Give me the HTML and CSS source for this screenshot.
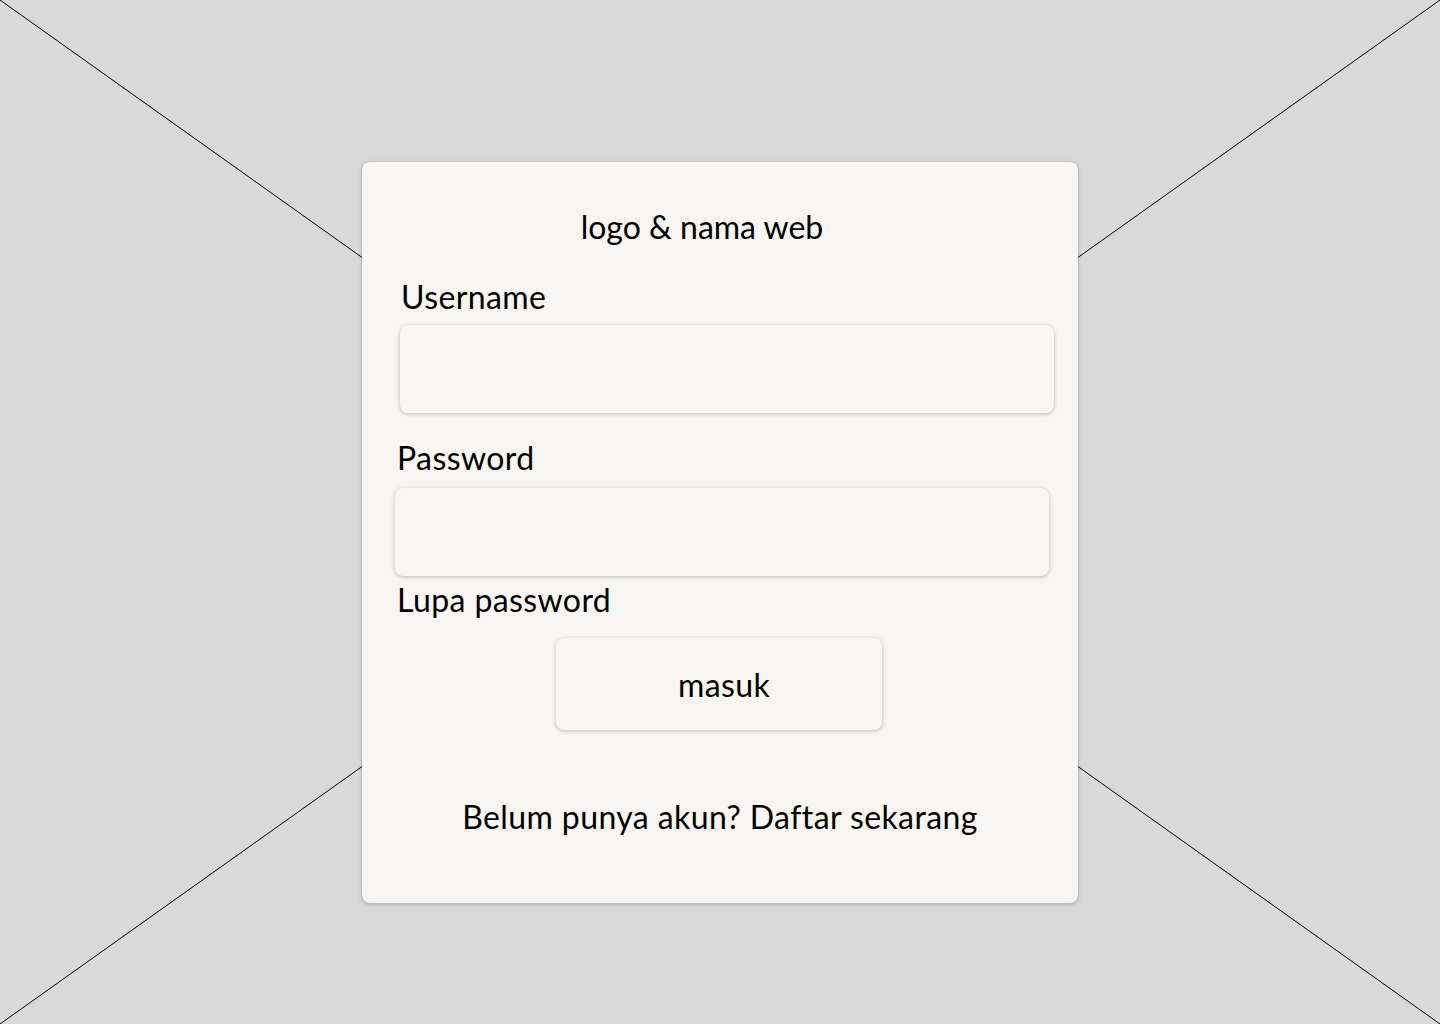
FILE: index.html
```html
<!DOCTYPE html>
<html lang="id">
<head>
<meta charset="utf-8">
<title>Login</title>
<link rel="stylesheet" href="styles.css">
</head>
<body>
<div class="page">
  <svg class="cross" viewBox="0 0 1440 1024" preserveAspectRatio="none" aria-hidden="true">
    <line x1="0" y1="0" x2="1440" y2="1024" />
    <line x1="1440" y1="0" x2="0" y2="1024" />
  </svg>
  <form class="card">
    <div class="title">logo &amp; nama web</div>
    <label class="label label-user">Username</label>
    <div class="field field-user"></div>
    <label class="label label-pass">Password</label>
    <div class="field field-pass"></div>
    <a class="label forgot">Lupa password</a>
    <button type="button" class="btn">masuk</button>
    <div class="signup">Belum punya akun? Daftar sekarang</div>
  </form>
</div>
</body>
</html>
```
FILE: styles.css
```css
* { box-sizing: border-box; }
html, body { margin: 0; padding: 0; }
body {
  background: #d9d9d9;
  font-family: "Lato", "Noto Sans", sans-serif;
  color: #000;
}
.page {
  position: relative;
  width: 1440px;
  height: 1024px;
  overflow: hidden;
  padding-top: 162px;
}
.cross {
  position: absolute;
  left: 0;
  top: 0;
  width: 1440px;
  height: 1024px;
}
.cross line { stroke: #000; stroke-width: 1; }
.card {
  position: relative;
  margin: 0 auto;
  width: 716px;
  height: 741px;
  background: #f8f5f2;
  border-radius: 8px;
  box-shadow: 0 1px 4px rgba(0,0,0,0.25);
  padding-top: 45px;
  display: flex;
  flex-direction: column;
  align-items: flex-start;
}
.title {
  width: 100%;
  padding-right: 36px;
  text-align: center;
  font-size: 32px;
  line-height: 40px;
}
.label {
  display: block;
  font-size: 32px;
  line-height: 40px;
  letter-spacing: 0.4px;
  color: #000;
  text-decoration: none;
}
.label-user { margin-top: 30px; margin-left: 39px; }
.field {
  width: 654px;
  height: 88px;
  background: #f8f5f2;
  border-radius: 8px;
  box-shadow: 0 1px 4px rgba(0,0,0,0.25);
}
.field-user { margin-top: 8px; margin-left: 38px; }
.label-pass { margin-top: 25px; margin-left: 35px; }
.field-pass { margin-top: 10px; margin-left: 33px; }
.forgot { margin-top: 4px; margin-left: 35px; }
.btn {
  margin-top: 18px;
  margin-left: 194px;
  width: 326px;
  height: 92px;
  border: none;
  background: #f8f5f2;
  border-radius: 8px;
  box-shadow: 0 1px 4px rgba(0,0,0,0.25);
  font-family: inherit;
  font-size: 32px;
  letter-spacing: 0.4px;
  color: #000;
  padding: 0 0 0 10px;
}
.signup {
  margin-top: 67px;
  width: 100%;
  text-align: center;
  font-size: 32px;
  line-height: 40px;
  letter-spacing: 0.4px;
}
```
